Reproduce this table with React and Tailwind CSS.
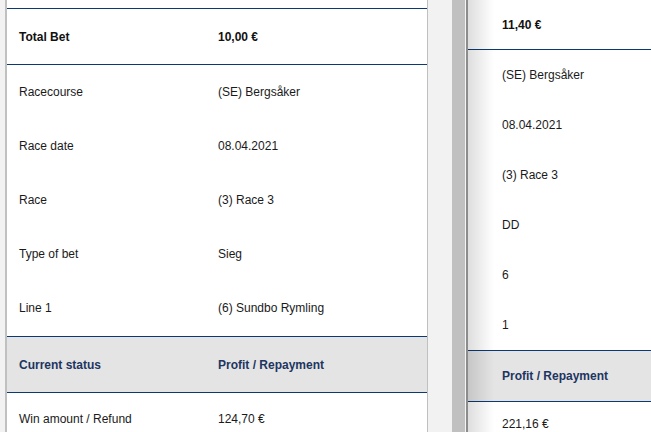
import React from "react";

const leftRows = [
  ["Racecourse", "(SE) Bergsåker"],
  ["Race date", "08.04.2021"],
  ["Race", "(3) Race 3"],
  ["Type of bet", "Sieg"],
  ["Line 1", "(6) Sundbo Rymling"],
];

const rightRows = ["(SE) Bergsåker", "08.04.2021", "(3) Race 3", "DD", "6", "1"];

// Left bet card
const LeftCard = () => {
  return (
    <div className="w-[423px] shrink-0 bg-white border-l-2 border-r border-[#c0c0c0]">
      <div className="h-[8px]" />
      <div className="h-[56px] grid grid-cols-[199px_1fr] items-center px-3 border-t border-[#0b3a73] font-bold text-[#111]">
        <span>Total Bet</span>
        <span>10,00 €</span>
      </div>
      <div className="border-t border-[#0b3a73] pb-[1px]">
        {leftRows.map(([label, value], i) => (
          <div key={i} className="h-[54px] grid grid-cols-[199px_1fr] items-center px-3 text-[#1a1a1a]">
            <span>{label}</span>
            <span>{value}</span>
          </div>
        ))}
      </div>
      <div className="h-[57px] grid grid-cols-[199px_1fr] items-center px-3 bg-[#e4e4e4] border-t border-b border-[#0b3a73] font-bold text-[#1d3561]">
        <span>Current status</span>
        <span>Profit / Repayment</span>
      </div>
      <div className="h-[52px] grid grid-cols-[199px_1fr] items-center px-3 text-[#1a1a1a]">
        <span>Win amount / Refund</span>
        <span>124,70 €</span>
      </div>
    </div>
  );
};

// Right bet card (partly visible)
const RightCard = () => {
  return (
    <div className="relative flex-1 bg-white">
      <div className="h-[49px] flex items-center pl-[34px] font-bold text-[#111]">11,40 €</div>
      <div className="border-t border-[#0b3a73]">
        {rightRows.map((value, i) => (
          <div key={i} className="h-[50px] flex items-center pl-[34px] text-[#1a1a1a]">
            {value}
          </div>
        ))}
      </div>
      <div className="h-[52px] flex items-center pl-[34px] bg-[#e4e4e4] border-t border-b border-[#0b3a73] font-bold text-[#1d3561]">
        Profit / Repayment
      </div>
      <div className="h-[44px] flex items-center pl-[34px] text-[#1a1a1a]">221,16 €</div>
      <div className="pointer-events-none absolute inset-y-0 left-0 w-[26px] bg-gradient-to-r from-[rgba(0,0,0,0.13)] to-transparent" />
    </div>
  );
};

const App = () => {
  return (
    <div
      className="h-[432px] w-[651px] overflow-hidden flex bg-[#f2f2f2] text-[12px] leading-[14px]"
      style={{ fontFamily: '"Liberation Sans", Arial, sans-serif' }}
    >
      <div className="w-[5px] shrink-0" />
      <LeftCard />
      <div className="w-[24px] shrink-0" />
      <div className="w-[13px] shrink-0 bg-[#c0c0c0]" />
      <div className="w-[1px] shrink-0 bg-[#f4f4f4]" />
      <div className="w-[2px] shrink-0 bg-[#8c8c8c]" />
      <RightCard />
    </div>
  );
};

export default App;
